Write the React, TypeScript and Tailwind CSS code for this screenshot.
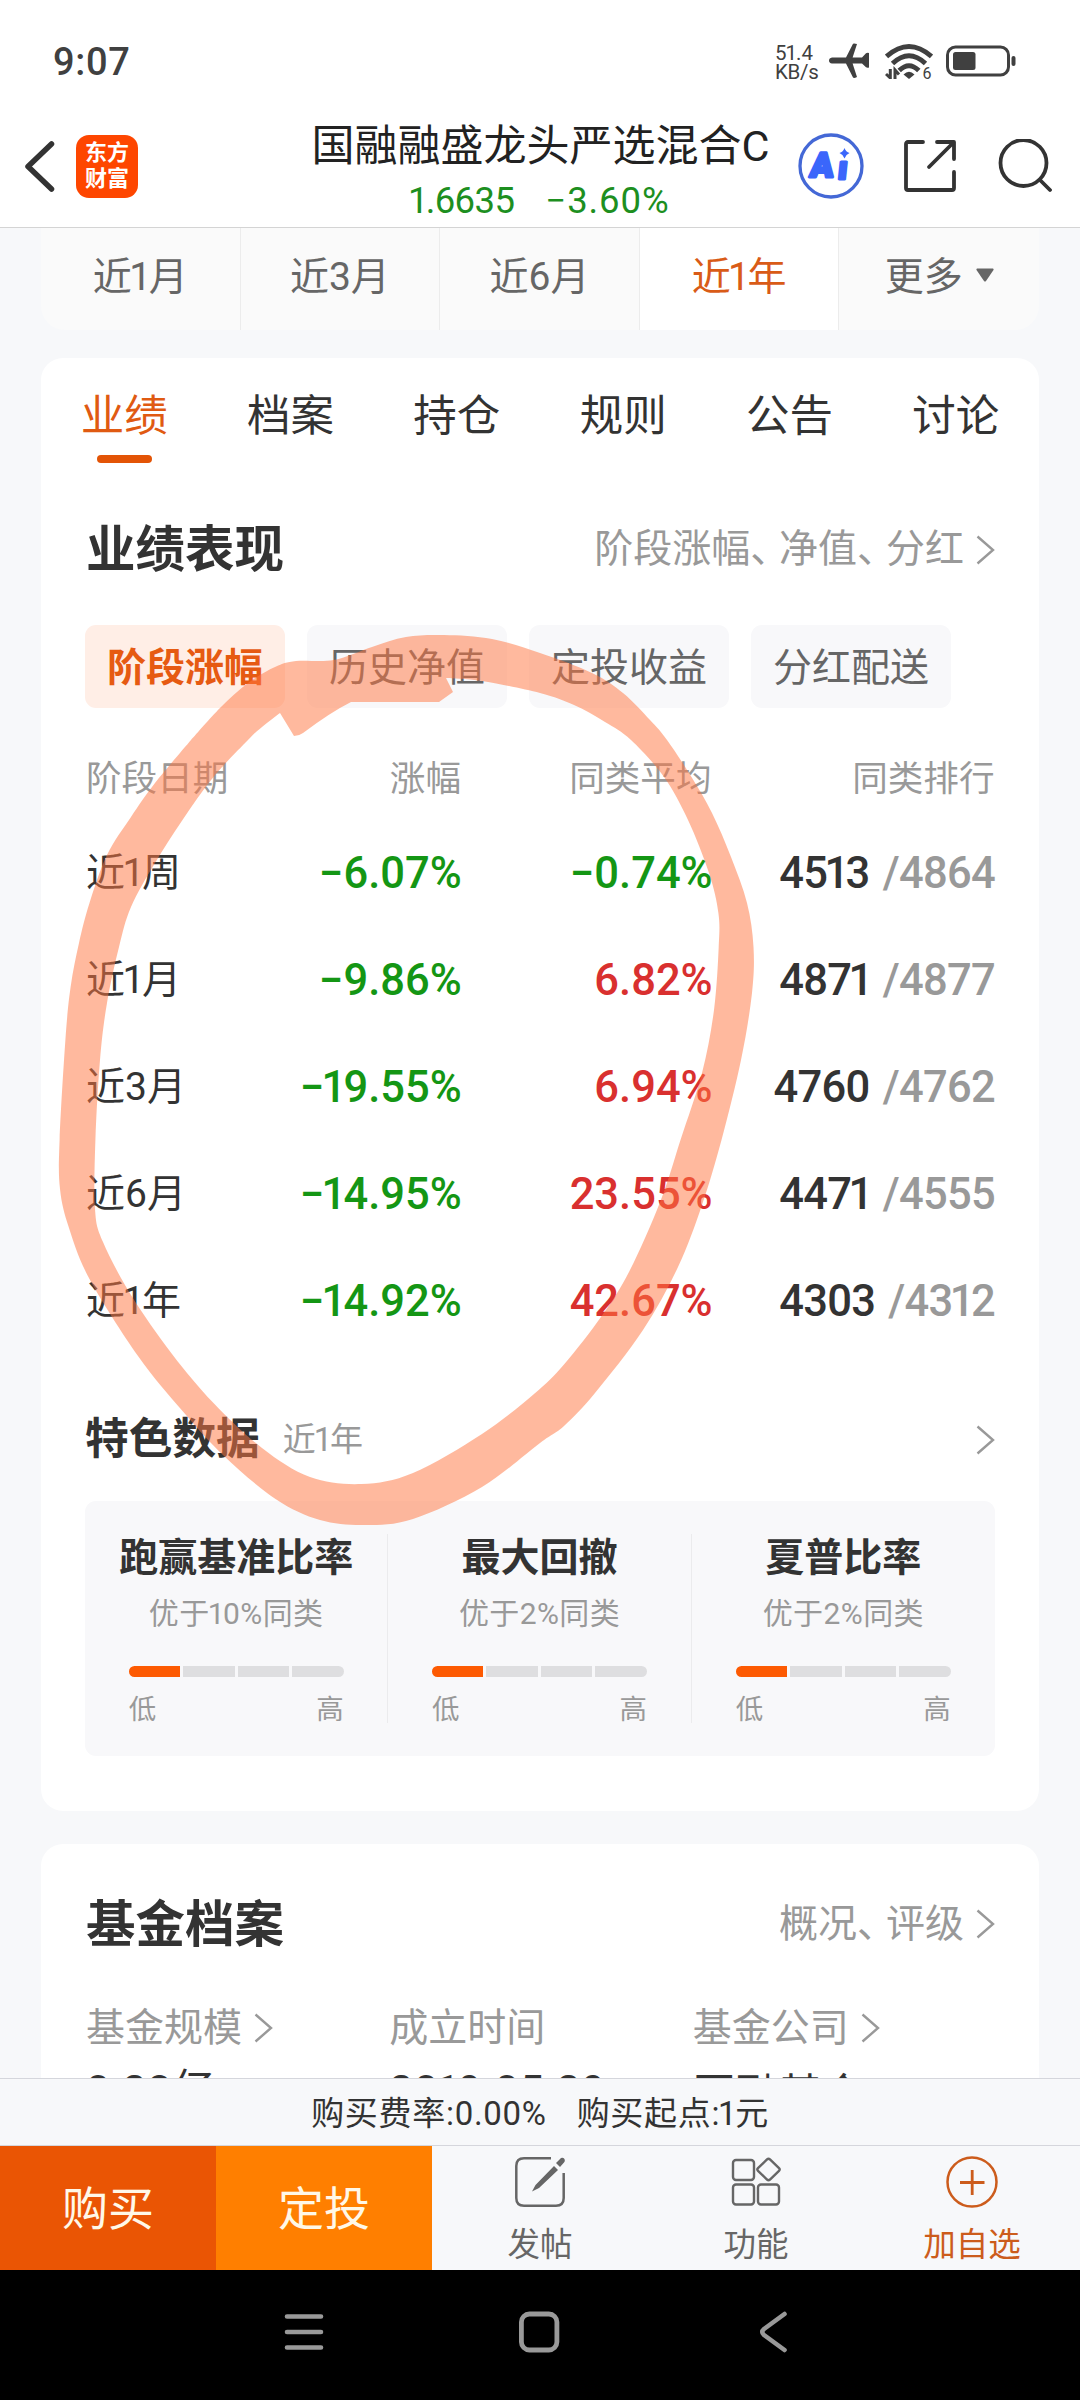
import React from 'react';

// 1. Shapes of the data
interface StageRow {
  label: string;
  gain: string;
  average: string;
  rank: string;
  total: string;
}

interface Feature {
  title: string;
  note: string;
}

interface ProfileItem {
  label: string;
  value: string;
  link: boolean;
}

type Point = [number, number];

const periods = ['近1月', '近3月', '近6月', '近1年'];
const sections = ['业绩', '档案', '持仓', '规则', '公告', '讨论'];
const chips = ['阶段涨幅', '历史净值', '定投收益', '分红配送'];

const stageRows: StageRow[] = [
  { label: '近1周', gain: '−6.07%', average: '−0.74%', rank: '4513', total: '4864' },
  { label: '近1月', gain: '−9.86%', average: '6.82%', rank: '4871', total: '4877' },
  { label: '近3月', gain: '−19.55%', average: '6.94%', rank: '4760', total: '4762' },
  { label: '近6月', gain: '−14.95%', average: '23.55%', rank: '4471', total: '4555' },
  { label: '近1年', gain: '−14.92%', average: '42.67%', rank: '4303', total: '4312' },
];

const features: Feature[] = [
  { title: '跑赢基准比率', note: '优于10%同类' },
  { title: '最大回撤', note: '优于2%同类' },
  { title: '夏普比率', note: '优于2%同类' },
];

const profile: ProfileItem[] = [
  { label: '基金规模', value: '0.28亿', link: true },
  { label: '成立时间', value: '2019-05-29', link: false },
  { label: '基金公司', value: '国融基金', link: true },
];

// 2. Marker ring: outer edge and inner edge, the inner one ends in the pen's blunt tail
const outerEdge: Point[] = [
  [191, 740], [220, 708], [248, 683], [275, 667], [296, 661], [334, 660], [372, 647], [406, 637], [444, 635],
  [492, 639], [540, 653], [592, 673], [623, 693], [650, 720], [667, 740], [691.5, 777], [712, 813], [731, 857],
  [747, 903], [753.5, 947], [752, 993], [741, 1060], [721.5, 1140], [702, 1205], [678, 1267], [643, 1330],
  [595, 1393], [564, 1426], [540, 1443], [482, 1487], [413, 1519], [365, 1525], [320, 1520], [275.5, 1499],
  [224, 1456], [182.5, 1411], [138, 1356], [89.5, 1279], [69, 1228], [60, 1189], [59.6, 1140], [65.4, 1040],
  [70.6, 987], [79, 943], [89.5, 903], [107, 855], [131, 817], [155, 783], [191, 740],
];

const innerEdge: Point[] = [
  [446, 678], [482, 681], [540, 693], [574, 705], [605, 722], [631, 740], [664, 777], [688, 820], [709, 873],
  [718.4, 913], [718.7, 947], [714, 1010], [702, 1073], [680.5, 1140], [660.5, 1201], [629.5, 1271],
  [602, 1315.5], [564, 1364.5], [534, 1394], [482, 1434], [413, 1473], [361.6, 1484], [310, 1477], [262, 1448],
  [213.5, 1403], [172, 1354], [131, 1295], [103, 1242], [95, 1209], [95.4, 1140], [100, 1060], [107, 1003],
  [119, 947], [131, 907], [155, 863], [182.5, 820], [213.5, 777], [248, 740], [262, 727], [280, 713],
];

const smooth = (pts: Point[]) => {
  let d = `M${pts[0][0]} ${pts[0][1]}`;
  for (let i = 0; i < pts.length - 1; i++) {
    const p0 = pts[Math.max(i - 1, 0)];
    const p1 = pts[i];
    const p2 = pts[i + 1];
    const p3 = pts[Math.min(i + 2, pts.length - 1)];
    d += `C${p1[0] + (p2[0] - p0[0]) / 6} ${p1[1] + (p2[1] - p0[1]) / 6} ${p2[0] - (p3[0] - p1[0]) / 6} ${p2[1] - (p3[1] - p1[1]) / 6} ${p2[0]} ${p2[1]}`;
  }
  return d;
};

const MarkerRing = () => (
  <svg className="pointer-events-none absolute left-0 top-0" width="1080" height="2400" viewBox="0 0 1080 2400">
    <path
      d={`${smooth(outerEdge)}Z${smooth(innerEdge)}L294 736Q299 736 303 733Q331 712 351 702L439 702L453 692Z`}
      fill="#ff7641"
      fillOpacity="0.51"
      fillRule="evenodd"
    />
  </svg>
);

// 3. Small helpers
// The digit 1 is set tighter than the other figures
const Num = ({ children }: { children: string }) => (
  <span className="whitespace-pre">
    {children.split(/(1|、)/).map((part, i) => {
      if (part === '1') return <span key={i} className="-mx-[0.065em]">1</span>;
      if (part === '、') return <span key={i} className="-mr-[0.26em]">、</span>;
      return part;
    })}
  </span>
);

const Chevron = () => (
  <svg className="h-[30px] w-[19px] shrink-0" viewBox="0 0 19 30" fill="none" stroke="#999" strokeWidth="2.4">
    <path d="M1.5 1.5 17 15 1.5 28.5" />
  </svg>
);

const valueColor = (value: string) => (value.startsWith('−') ? 'text-[#149614]' : 'text-[#d9302f]');

// 4. Phone status bar
const StatusBar = () => (
  <div className="flex h-[122px] items-center pl-[53px] pr-[64px] text-[#404040]">
    <span className="pt-[2px] text-[38px] font-medium tracking-[0.7px]">9:07</span>
    <div className="ml-auto flex items-center">
      <div className="mr-[12px] w-[42px] pt-[3px] text-[20.5px] leading-[19px]">
        <div>5<span className="-mx-px">1</span>.4</div>
        <div className="tracking-[-0.3px]">KB/s</div>
      </div>
      <svg width="41" height="36" viewBox="0 0 41 36" fill="#404040">
        <path d="M3 14.5H17L24 .8Q25 0 28 1L23.6 14.5H33L37 10.3Q38 9.6 40 10V24.5Q38 25 37 24.2L33 20.5H23.6L28 34Q25 35.5 24 34.5L17 20.5H3Q0 20 0 17.5 0 15 3 14.5Z" />
      </svg>
      <svg className="ml-[15px]" width="48" height="36" viewBox="0 0 48 36" fill="none" stroke="#404040" strokeWidth="4.9">
        <path d="M1.5 13.5Q24 -6.5 46.5 13.5M7.5 20.5Q24 5 40.5 20.5M14.2 27.5Q24 18 33.8 27.5" />
        <path d="M18.5 31.5Q24 26 29.5 31.5L24 36Z" fill="#404040" stroke="none" />
        <path d="M5.3 26V35L1 31M10 36V27L14 31.5" strokeWidth="3" />
        <text x="37.5" y="35.5" fontSize="16" fill="#404040" stroke="none">6</text>
      </svg>
      <svg className="ml-[13px]" width="70" height="32" viewBox="0 0 70 32" fill="none">
        <rect x="1.5" y="2" width="61" height="28" rx="8" stroke="#404040" strokeWidth="3" />
        <rect x="7" y="7" width="22.5" height="18" rx="2.5" fill="#404040" />
        <rect x="65.5" y="11" width="4" height="10" rx="2" fill="#404040" />
      </svg>
    </div>
  </div>
);

const FundHeader = () => (
  <div className="relative flex h-[105px] items-center pl-[24px]">
    <svg className="mb-[18px]" width="32" height="52" viewBox="0 0 32 52" fill="none" stroke="#333" strokeWidth="5.5" strokeLinecap="round" strokeLinejoin="round">
      <path d="M27.5 4 4 26.5 27.5 49" />
    </svg>
    <div className="mb-[17px] ml-[20px] flex h-[63px] w-[62px] flex-col items-center justify-center rounded-[13px] bg-[#fe4600] text-[22px] font-bold leading-[26px] text-white">
      <span>东方</span>
      <span>财富</span>
    </div>
    <div className="absolute inset-x-0 -top-px flex flex-col items-center">
      <div className="h-[50px] pl-px text-[43px] leading-[50px] text-[#222]">国融融盛龙头严选混合C</div>
      <div className="flex h-[50px] gap-[31px] pt-px text-[36.5px] leading-[58px] text-[#1d8f1f]">
        <span className="tracking-[-0.6px]"><Num>1.6635</Num></span>
        <span className="tracking-[0.9px]"><Num>−3.60%</Num></span>
      </div>
    </div>
    <div className="relative ml-auto mr-[28px] flex items-center pb-[17px]">
      <svg className="mr-[39px]" width="66" height="66" viewBox="0 0 66 66">
        <circle cx="33" cy="33" r="31" fill="none" stroke="#4468d6" strokeWidth="3.3" />
        <g transform="translate(4 0) skewX(-6)" fill="#3a66fb" stroke="#3a66fb" strokeWidth="3" strokeLinejoin="round">
          <text x="12" y="44" fontSize="34" fontWeight="900">A</text>
          <text x="40" y="46" fontSize="32" fontWeight="900">ı</text>
        </g>
        <path d="M46.5 15Q47.8 19 51.5 20 47.8 21.5 46.5 25.5 45.2 21.5 41.5 20 45.2 19 46.5 15Z" fill="#3a66fb" />
      </svg>
      <svg className="mr-[41px]" width="54" height="54" viewBox="0 0 54 54" fill="none" stroke="#333" strokeWidth="3.8" strokeLinecap="round" strokeLinejoin="round">
        <path d="M20 3H5Q3 3 3 5V49Q3 51 5 51H49Q51 51 51 49V33" />
        <path d="M34 3H51V20M50 4 26 28" />
      </svg>
      <svg width="54" height="54" viewBox="0 0 54 54" fill="none" stroke="#333" strokeWidth="3.8" strokeLinecap="round">
        <circle cx="25.5" cy="24" r="23" />
        <path d="M42 41 52 51" />
      </svg>
    </div>
  </div>
);

const PeriodTabs = () => (
  <div className="mx-[41px] flex h-[102px] shrink-0 divide-x divide-[#ececec] overflow-hidden rounded-b-[24px] bg-[#fafafa] text-[39px] text-[#666]">
    {periods.map(p => (
      <div
        key={p}
        className={`flex w-1/5 items-center justify-center pb-[3px] ${p === '近1年' ? 'bg-white text-[#d95b17]' : ''}`}
      >
        <Num>{p}</Num>
      </div>
    ))}
    <div className="flex w-1/5 items-center justify-center pb-[3px]">
      更多
      <svg className="mb-[5px] ml-[13px]" width="18" height="14" viewBox="0 0 18 14" fill="#666">
        <path d="M1 .5H17Q18 1 17.5 2L10 13Q9 14 8 13L.5 2Q0 1 1 .5Z" />
      </svg>
    </div>
  </div>
);

const StageTable = () => (
  <div className="mt-[40px] text-[#333]">
    <div className="flex h-[59px] pl-px text-[35.6px] leading-[62px] text-[#999]">
      <span className="w-[200px]">阶段日期</span>
      <span className="w-[175px] text-right">涨幅</span>
      <span className="w-[250.5px] text-right">同类平均</span>
      <span className="w-[283px] text-right">同类排行</span>
    </div>
    <div className="pt-[13px]">
      {stageRows.map(row => (
        <div key={row.label} className="flex h-[107px] items-center pl-px text-[43.5px] font-medium">
          <span className="w-[180px] text-[39px] font-normal"><Num>{row.label}</Num></span>
          <span className={`w-[196px] text-right ${valueColor(row.gain)}`}><Num>{row.gain}</Num></span>
          <span className={`w-[251px] text-right ${valueColor(row.average)}`}><Num>{row.average}</Num></span>
          <span className="w-[282.5px] text-right tracking-[-0.7px]">
            <Num>{row.rank}</Num>
            <span className="ml-[13px] text-[#999]"><Num>{`/${row.total}`}</Num></span>
          </span>
        </div>
      ))}
    </div>
  </div>
);

const FeatureCell = ({ title, note }: Feature) => (
  <div className="flex w-1/3 flex-col items-center">
    <div className="h-[48px] text-[39px] font-bold leading-[48px] text-[#333]">{title}</div>
    <div className="mt-[7px] h-[50px] text-[30px] leading-[50px] tracking-[0.4px] text-[#999]"><Num>{note}</Num></div>
    <div className="mt-[27px] flex h-[11px] w-[215px] shrink-0 gap-[3px] overflow-hidden rounded-full">
      <div className="flex-1 bg-[#fd5a02]" />
      <div className="flex-1 bg-[#dedee0]" />
      <div className="flex-1 bg-[#dedee0]" />
      <div className="flex-1 bg-[#dedee0]" />
    </div>
    <div className="mt-[16px] flex h-[30px] w-[215px] justify-between text-[27.5px] leading-[34px] text-[#999]">
      <span>低</span>
      <span>高</span>
    </div>
  </div>
);

const PerformanceCard = () => (
  <div className="mx-[41px] mt-[28px] h-[1453px] shrink-0 rounded-[22px] bg-white">
    {/* Section tabs */}
    <div className="grid h-[105px] grid-cols-6 text-[43.5px] text-[#333]">
      {sections.map((s, i) => (
        <div key={s} className={`flex flex-col items-center pt-[29px] ${i === 0 ? 'text-[#e05a12]' : ''}`}>
          <span className="h-[56px] leading-[60px]">{s}</span>
          {i === 0 && <div className="mt-[12px] h-[8px] w-[55px] shrink-0 rounded-full bg-[#e35406]" />}
        </div>
      ))}
    </div>

    <div className="px-[44px]">
      <div className="flex h-[172px] items-center pt-px">
        <h2 className="pl-px pt-[2px] text-[49.5px] font-bold text-[#333]">业绩表现</h2>
        <span className="ml-auto mr-[12px] text-[39px] text-[#999]"><Num>阶段涨幅、净值、分红</Num></span>
        <Chevron />
      </div>

      <div className="-mt-[10px] flex gap-[22px] text-[39px] text-[#666]">
        {chips.map((c, i) => (
          <div
            key={c}
            className={`flex h-[83px] w-[200px] items-center justify-center rounded-[11px] pt-[4px] ${
              i === 0 ? 'bg-[#ffeee6] font-bold text-[#e65a12]' : 'bg-[#f8f8fa]'
            }`}
          >
            {c}
          </div>
        ))}
      </div>

      <StageTable />

      <div className="mt-[42px] flex h-[86px] items-center text-[#333]">
        <h3 className="text-[43.7px] font-bold">特色数据</h3>
        <span className="ml-[23px] text-[33px] text-[#999]"><Num>近1年</Num></span>
        <div className="ml-auto"><Chevron /></div>
      </div>

      <div className="mt-[18px] flex h-[255px] divide-x divide-[#ebebed] rounded-[11px] bg-[#f8f8fa] py-[33px]">
        {features.map(f => <FeatureCell key={f.title} title={f.title} note={f.note} />)}
      </div>
    </div>
  </div>
);

const ProfileCard = () => (
  <div className="mx-[41px] mt-[33px] h-[400px] shrink-0 rounded-t-[22px] bg-white px-[44px]">
    <div className="flex h-[160px] items-center">
      <h2 className="pl-px pt-[2px] text-[49.5px] font-bold text-[#333]">基金档案</h2>
      <span className="ml-auto mr-[12px] text-[39px] text-[#999]"><Num>概况、评级</Num></span>
      <Chevron />
    </div>
    <div className="grid grid-cols-3">
      {profile.map((item, i) => (
        <div key={item.label} className="pl-px">
          <div className="flex h-[48px] items-center gap-[12px] text-[39px] text-[#999]">
            {item.label}
            {item.link && <Chevron />}
          </div>
          <div className={`h-[58px] text-[43px] leading-[57px] text-[#333] ${i === 2 ? 'mt-[15px]' : 'mt-[10px] tracking-[0.5px]'}`}>
            <Num>{item.value}</Num>
          </div>
        </div>
      ))}
    </div>
  </div>
);

const ActionBar = () => (
  <div className="flex h-[124px] shrink-0 bg-[#f7f8fa] text-[32.5px] text-[#666]">
    <div className="flex w-1/5 items-center justify-center bg-[#ea5504] pt-[3px] text-[46px] text-[#fff8e8]">购买</div>
    <div className="flex w-1/5 items-center justify-center bg-[#ff7f00] pt-[3px] text-[46px] text-[#fff8e8]">定投</div>
    <div className="flex w-1/5 flex-col items-center pt-[10px]">
      <svg width="52" height="52" viewBox="0 0 52 52" fill="none" stroke="#666" strokeWidth="2.5">
        <path d="M37 2.3H10Q2.3 2.3 2.3 10V42Q2.3 49.7 10 49.7H42Q49.7 49.7 49.7 42V17" />
        <path d="M40 10 44 14 25 32 18 35.5 21.5 29ZM42 7 47 2Q49 1 50.5 3 51.5 5 50 6.5L46 11Z" fill="#666" stroke="none" />
      </svg>
      <span className="mt-[11px] h-[46px] leading-[52px]">发帖</span>
    </div>
    <div className="flex w-1/5 flex-col items-center pt-[10px]">
      <svg width="52" height="52" viewBox="0 0 52 52" fill="none" stroke="#666" strokeWidth="2.4">
        <rect x="3" y="4" width="21" height="20" rx="3" />
        <rect x="3" y="28.5" width="21" height="20" rx="3" />
        <rect x="28" y="28.5" width="21" height="20" rx="3" />
        <path d="M37 3.5Q38.5 2.2 40 3.5L49 12.2Q50.3 13.5 49 14.8L40 23.5Q38.5 24.8 37 23.5L28 14.8Q26.7 13.5 28 12.2Z" />
      </svg>
      <span className="mt-[11px] h-[46px] leading-[52px]">功能</span>
    </div>
    <div className="flex w-1/5 flex-col items-center pt-[10px] text-[#cc5c1c]">
      <svg width="52" height="52" viewBox="0 0 52 52" fill="none" stroke="#cc5c1c" strokeWidth="2.5">
        <circle cx="26" cy="26" r="24.5" />
        <path d="M14 26.5H38.5M26.2 14V39" strokeWidth="2.8" />
      </svg>
      <span className="mt-[11px] h-[46px] leading-[52px]">加自选</span>
    </div>
  </div>
);

const SystemNav = () => (
  <div className="flex h-[130px] shrink-0 items-center justify-center gap-[195px] bg-black pb-[6px]">
    <svg width="42" height="42" viewBox="0 0 42 42" stroke="#999" strokeWidth="4.6" strokeLinecap="round">
      <path d="M5 5.5H39M5 21H39M5 36.5H39" />
    </svg>
    <svg width="42" height="42" viewBox="0 0 42 42" fill="none" stroke="#999" strokeWidth="4.8">
      <rect x="2.4" y="3" width="35.5" height="36" rx="8" />
    </svg>
    <svg width="42" height="42" viewBox="0 0 42 42" fill="none" stroke="#999" strokeWidth="4.6" strokeLinecap="round" strokeLinejoin="round">
      <path d="M28.5 3 8 18Q4.5 21 8 24L28.5 39" />
    </svg>
  </div>
);

export default function App() {
  return (
    <div className="relative flex h-[2400px] w-[1080px] flex-col overflow-hidden bg-[#f7f8fa] font-[Roboto,'Noto_Sans_CJK_SC',sans-serif]">
      <div className="h-[228px] shrink-0 border-b border-[#d4d4d4] bg-white">
        <StatusBar />
        <FundHeader />
      </div>

      <div className="flex min-h-0 flex-1 flex-col overflow-hidden">
        <PeriodTabs />
        <PerformanceCard />
        <ProfileCard />
      </div>

      {/* Fee hint */}
      <div className="flex h-[68px] shrink-0 items-center justify-center gap-[30px] border-y border-[#d5d6dc] pt-[3px] text-[33px] tracking-[0.7px] text-[#333]">
        <Num>购买费率:0.00%</Num>
        <Num>购买起点:1元</Num>
      </div>
      <ActionBar />
      <SystemNav />

      <MarkerRing />
    </div>
  );
}
